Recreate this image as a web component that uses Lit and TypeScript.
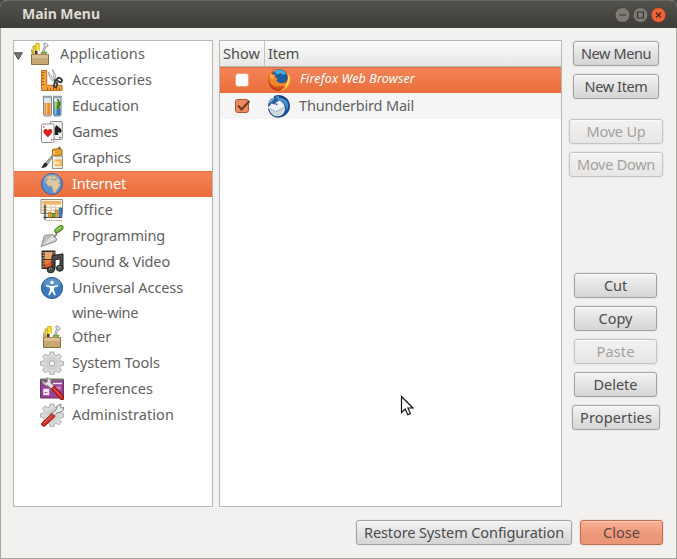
import { LitElement, html, svg, css, nothing } from "lit";
import { customElement, property } from "lit/decorators.js";
import { classMap } from "lit/directives/class-map.js";

const toolbox = svg`
  <path d="M5 13V4h3v9z" fill="#e9d76a" stroke="#a78d1c" stroke-width=".8"/>
  <path d="M7.600 9V1.500h3.600V9z" fill="#f7e32d" stroke="#c9a811" stroke-width=".8"/>
  <path d="M7 9h3v4H7z" fill="#49283f"/><path d="M9.500 8h1.600v5H9.500z" fill="#fff"/>
  <path d="M3.500 7.500l2 5.500H4z" fill="#ead14f" stroke="#9c7f16" stroke-width=".6"/>
  <path d="M13.500 12l3-8-.8-2.500 2-.7 1.300 1.400 1.200.8-.7 1.700-1.700.2-2.300 7.500z" fill="#e6e8e4" stroke="#83877f" stroke-width=".8"/>
  <path d="M12.500 13l1-3h5.500l-1 3z" fill="#88b84c" stroke="#5d8429" stroke-width=".6"/>
  <path d="M3.500 12.500h17v10h-17z" fill="#c7a874" stroke="#8d7040"/>
  <path d="M4 13h16v3H4z" fill="#d9c095"/><path d="M3.500 12.500h17" stroke="#a78855"/>`;

const gear = svg`
  <path d="M10.200 1h3.600l.6 3 1.800.8 2.700-1.800 2.500 2.500-1.800 2.700.8 1.800 3 .6v3.600l-3 .6-.8 1.800 1.800 2.700-2.500 2.500-2.700-1.800-1.800.8-.6 3h-3.600l-.6-3-1.800-.8-2.700 1.800-2.500-2.500 1.800-2.700-.8-1.800-3-.6v-3.600l3-.6.8-1.800-1.800-2.700 2.500-2.500 2.700 1.800 1.800-.8z"
    fill="#dcdcdb" stroke="#a3a4a2" stroke-width=".9"/>
  <circle cx="12" cy="12.400" r="6" fill="#d2d3d2" stroke="#c0c1bf" stroke-width=".7"/>
  <circle cx="12" cy="12.400" r="2.700" fill="#fff" stroke="#a3a4a2"/>`;

const icons: Record<string, unknown> = {
  toolbox,
  gear,
  accessories: svg`
    <path d="M1.500 2.500h5.200v14.800H22v5.200H1.500z" fill="#f2a13c" stroke="#c1701a"/>
    <path d="M2 4.500h2.500M2 7.500h2M2 10.500h2.500M2 13.500h2M2 16.500h2.500M7.500 22v-2.500M10.500 22v-2M13.500 22v-2.500M16.500 22v-2M19.500 22v-2.500" stroke="#94500d" stroke-width=".8"/>
    <path d="M15 13.500L8.500 4l.8 4.800 4.500 5.500zM14.300 12L12.500 1.500l3 5 .3 5.800z" fill="#e5e7e6" stroke="#969996" stroke-width=".8"/>
    <path d="M14 13l3.500-1.200" stroke="#3d3f3d" stroke-width="2.400"/>
    <ellipse cx="19.500" cy="12" rx="2.600" ry="1.900" transform="rotate(28 19.500 12)" fill="none" stroke="#3d3f3d" stroke-width="1.900"/>
    <ellipse cx="15.500" cy="17" rx="1.600" ry="2.400" transform="rotate(12 15.500 17)" fill="none" stroke="#3d3f3d" stroke-width="1.900"/>`,
  education: svg`
    <path d="M3.500 3h8v17.500q0 1.500-1.500 1.500H5q-1.500 0-1.500-1.500z" fill="#dfe6ea" stroke="#798991"/>
    <path d="M4.500 9h6v12h-6z" fill="#ef8f2c"/><path d="M6 9.500h1.300v11H6z" fill="#ffc98b"/>
    <path d="M13.500 3H21v17.500q0 1.500-1.500 1.500H15q-1.500 0-1.500-1.500z" fill="#d3e0e8" stroke="#687e8c"/>
    <path d="M14.300 7.500h6v7.500h-6z" fill="#659d35"/><path d="M14.300 15h6v6.200h-6z" fill="#3475b7"/>
    <path d="M15.200 5h1.300v15.500h-1.300z" fill="#ffffff99"/><path d="M17.500 5l2.500 5-3 4" stroke="#36641f" stroke-width="1.300" fill="none"/>
    <path d="M2.500 2.700H12M13 2.700h9" stroke="#93a1a8" stroke-width="1.700"/>`,
  games: svg`
    <rect x="10" y="1.500" width="12.300" height="18" rx="1.300" fill="#f0f0ef" stroke="#8d8f8c"/>
    <path d="M16.500 5c1.400 2 5 3.200 5 5.900 0 2-2.500 2.400-3.700 1.200l.8 3h-4v-6c0-1.600 1.200-2.700 1.900-4.100z" fill="#1c1d1c"/>
    <rect x="1.500" y="4" width="12.500" height="18.500" rx="1.300" fill="#fff" stroke="#8d8f8c"/>
    <path d="M7.900 17.500c-1.400-2-4.500-3.700-4.500-6.400 0-2.500 3.200-3 4.500-.7 1.300-2.300 4.400-1.800 4.400.7 0 2.700-3 4.400-4.400 6.400z" fill="#d92020"/>
    <path d="M3.200 6h1.500v1.700H3.200zM10.900 19h1.500v1.700h-1.500z" fill="#e36161"/><path d="M19.500 17h1.200v1.200h-1.200z" fill="#333"/>`,
  graphics: svg`
    <path d="M12.500 10h10v12.500h-10z" fill="#e9e9df" stroke="#92918a"/>
    <path d="M12.500 3.500Q17.500 1.800 22 3.500V9q-5 1.500-9.500 0z" fill="#e5a02d" stroke="#a66d14"/>
    <path d="M18.500.8l1.700-.3.500 2.500h-2.500z" fill="#7b5a2b"/><path d="M14 5v3.500" stroke="#ffdd8e" stroke-width="1.500"/>
    <path d="M13 13.500h9V20h-9z" fill="#f3b24b"/><path d="M15 15.500h5v3h-5z" fill="#fae1b5"/><path d="M14 11v10.500" stroke="#fff" stroke-width="1.300"/>
    <path d="M12 9.500L5.500 17l2 1.500 5-7z" fill="#a6a8a3" stroke="#71736f" stroke-width=".7"/>
    <path d="M5.300 16.500l2.500 2c-1 2.600-3.800 3.500-6.800 3.500 1.800-1.200 2.200-4.800 4.300-5.500z" fill="#272827"/>`,
  globe: svg`
    <circle cx="12" cy="12" r="10.500" fill="#5b91cf" stroke="#355e98"/>
    <ellipse cx="12" cy="8" rx="8.500" ry="6" fill="#8db5e3" opacity=".65"/>
    <path d="M4.500 7.500Q7 4 10 3.500l2 1 2.500-1 2 1.500-1 1 3 1 1.500 3-1.500 1.500 2 1-2.500 4-2.500 4-2 .5-1-4.500-1-2.500-3 .2L6 10.500l1-2.500 2-1.500-2 .2z" fill="#e0c79d" stroke="#b99d6a" stroke-width=".5"/>
    <path d="M11 7l2.500.5 3 .2" stroke="#6d9bd0" stroke-width="1.200" fill="none"/>`,
  office: svg`
    <path d="M1 1.500h21.500v14H1z" fill="#f9f5e7" stroke="#918f82"/>
    <path d="M2.500 3h18.500v3.500H2.500z" fill="#f4b35e"/><path d="M2.500 6.500h4v8h-4z" fill="#f8d395"/>
    <path d="M2.500 9.500H21M2.500 12.500H21M11 3v12M15.500 3v12" stroke="#cfc4a7" stroke-width=".7"/>
    <path d="M5 6.500v15.500M3.500 19.500H22" stroke="#3c3b37" stroke-width="1.200"/><path d="M3.500 9h3M3.500 12h3M3.500 15h3M3.500 18h3" stroke="#444" stroke-width=".7"/>
    <path d="M8.200 14.500h2.600v5H8.200z" fill="#f4a02b" stroke="#9e6113" stroke-width=".7"/><path d="M12 15.500h2.400v4H12z" fill="#67a736" stroke="#3f6c1e" stroke-width=".7"/>
    <path d="M15.200 12h2.700v7.500h-2.700z" fill="#f0a92f" stroke="#96651b" stroke-width=".7"/><path d="M19.200 10h2.700v9.500h-2.700z" fill="#467fc3" stroke="#264e84" stroke-width=".7"/>
    <path d="M6 22.500h16" stroke="#c18a51" stroke-dasharray="1.500 1"/>`,
  trowel: svg`
    <path d="M1.300 22.500L4 12.500q.5-1.200 2-1.300L13 10.500l4 5q-.6 1.500-2 2.200z" fill="#bdc0be" stroke="#858884" stroke-width=".9"/>
    <path d="M2.500 21.200L12.500 11.500l3.300 4.200z" fill="#e0e2e1"/><path d="M13.500 13l3-2.300-.5-2.700" fill="none" stroke="#777" stroke-width="1.500"/>
    <path d="M14.500 7.500q0-2 2.500-4l3.500-2q2-.5 2.500 1t-1 3.500L18 8.500q-2.200 1.200-3.500-1z" fill="#78b33d" stroke="#477623"/>
    <path d="M16.300 6.500q1.500-2 4.700-3.500" stroke="#bce28d" fill="none"/>`,
  media: svg`
    <path d="M2 1h13v17.500H2z" fill="#3f332b" stroke="#2f2926"/>
    <path d="M4.500 2h8v7h-8z" fill="#e9a768"/><path d="M4.500 10h8v7.500h-8z" fill="#dd592c"/><path d="M4.500 10h8L8 13.500l-3.500 1z" fill="#f2793d"/>
    <path d="M3.200 2v16M14 2v16" stroke="#eee0ca" stroke-dasharray="1.300 1.500" stroke-width="1"/>
    <path d="M12 5.800l11-2v14.400h-3V8.800l-5.300 1V20H12z" fill="#4b4d4b" stroke="#222"/>
    <ellipse cx="10.700" cy="19.800" rx="3.600" ry="3" fill="#4b4d4b" stroke="#222"/><ellipse cx="19.800" cy="18.200" rx="3.400" ry="3" fill="#4b4d4b" stroke="#222"/>
    <path d="M9 19q1.500-1.500 3 0M18.200 17.500q1.500-1.500 3 0" fill="none" stroke="#999"/>`,
  access: svg`
    <circle cx="12" cy="12" r="10.600" fill="#3c7ab9" stroke="#285b91"/><ellipse cx="12" cy="7.500" rx="8.500" ry="5.500" fill="#77a7d5" opacity=".5"/>
    <circle cx="12" cy="6.500" r="1.700" fill="#fff"/>
    <path d="M6.300 9l4.200 1h3l4.200-1 .3 1.200-4 1.400v2.600l1.800 4.700-1.300.5L12 15.200l-2.500 4.200-1.300-.5 1.800-4.700v-2.600l-4-1.400z" fill="#fff"/>`,
  preferences: svg`
    <path d="M.5 2.500h23V21H.5z" fill="#974394" stroke="#6a3269"/><path d="M.5 1.500h23v2.300H.5z" fill="#6e6d69"/>
    <path d="M13 6.500h9M4 12.500h4.500v5H4z" fill="#f5e8f4" stroke="#f5e8f4" stroke-width="1.500"/><path d="M15 9.500h6v3h-6z" fill="#c68cc4"/><path d="M4.500 15.500h3" stroke="#a66ba2"/>
    <path d="M2 3.500L5.500 6 8 4 6.500.8q3.500 0 4.500 3l-.3 2.200 4 4-2.500 2.500-4.500-4q-4 .5-5.700-5z" fill="#e4e5e2" stroke="#8f918c"/>
    <path d="M11.500 11.500l3-2.500 8.500 9.500.5 4h-3z" fill="#cb2927" stroke="#921816"/><path d="M13.500 11.500l7.500 8" stroke="#f07167"/>`,
  admin: svg`${gear}
    <path d="M11 11.500l5-4.700L17 3l4-2-.5 3 1.500 1 2-.8q-.2 4-4 5.300h-2.500L13 14z" fill="#e6e8e4" stroke="#7f837c"/>
    <path d="M1.500 20.500L12 10.500l3 3-10.500 9.800q-3 .2-3-2.800z" fill="#cf302b" stroke="#941c18"/><path d="M4 20l8.500-8" stroke="#ef756b"/>`,
  firefox: svg`
    <circle cx="12" cy="12" r="10.800" fill="#d9531e"/>
    <path d="M22 6.500q2.500 6-.5 11-3.500 5.300-9.500 5.300 7-2.500 8-8z" fill="#f6c22f"/>
    <circle cx="12.500" cy="9.300" r="8" fill="#1e5f9f"/>
    <path d="M7 3.300Q12 .5 17 3l2.500 3-4 .5-2-1.500-3 1.500z" fill="#48b1dd"/>
    <path d="M18.500 3.500q3 3 2.600 7.500-.6 5-5.600 7 5.500.5 7-5.500.8-5.500-4-9z" fill="#fbe05a"/>
    <path d="M3.500 4.500L5.300 6.500l3.500.2L7.800 9l3 1.200-1.500 2.300 2.200 2q3 1.800 7-.8-1.500 4.800-6.500 4.800-6 .5-9-4.500-1.500-5 .5-9.500z" fill="#f0852a"/>
    <path d="M2.500 9.500q.5-3 1.500-4.500l1.300 2 2.500.3-1.500 2 .5 2.700z" fill="#f9ae3f"/>
    <path d="M1.200 13.500q3 6.500 9.800 7.500 3 .2 5-.8-2 2.500-5 2.500-8-.5-9.800-9.200z" fill="#bb3a18"/>`,
  thunderbird: svg`
    <path d="M7 2Q14-.5 19.500 4q4.800 5 3 11.500Q20.500 21.500 14 23.300q-5.500.6-9.500-2.800z" fill="#1f4f93"/>
    <path d="M8.500 2.500Q16 1.500 20 7.500q2 5-.5 9.500 0-6-4-8.500-4-2-8-1.500z" fill="#4394cf"/>
    <path d="M12 1.500q6 .5 9 6.500-4.500-4.500-9-4.500zM15 7.500q3.800 3 3.500 7.500-1.500-4-5-6z" fill="#143874"/>
    <circle cx="10" cy="14.500" r="8" fill="#eef1f4"/>
    <path d="M3 15.500l5.500 3 8.500-5q-.5 6.500-5.500 8.500Q4.500 22 3 15.500z" fill="#cdd7e2"/>
    <path d="M3 14.500l5.500 3.500 8.500-4.500" stroke="#9caec1" fill="none"/>
    <path d="M1 13Q.7 7 4.500 4.500L9 3l3 4-2.500 1-2 2.500-3-1L2.500 12z" fill="#2b5f9f"/>
    <path d="M1.700 10Q2 6 5.500 4.500L8 4 4.500 7.500z" fill="#8eb4d8"/>
    <path d="M8 9.500l3 .2-1.600 1.500z" fill="#23436b"/>
    <path d="M1.500 14.500q1 6 7 8.300 3.500.6 6-.5" stroke="#1c4685" stroke-width="1.200" fill="none"/>`,
};

/** A text run whose tracking is set so that it occupies a given width. */
@customElement("fit-label")
class FitLabel extends LitElement {
  @property() text = "";
  @property({ type: Number }) w = 0;
  static styles = css`
    :host { display: inline-block; white-space: pre; padding-bottom: 2px; }
    .run { display: inline-block; }
  `;
  render() {
    return html`<span class="run">${this.text}</span>`;
  }
  firstUpdated() {
    const run = this.renderRoot.querySelector(".run") as HTMLElement;
    const natural = run.getBoundingClientRect().width;
    const gap = (this.w - natural) / this.text.length;
    run.style.letterSpacing = `${gap.toFixed(3)}px`;
  }
}

const icon = (name: string) =>
  html`<svg class="icon" viewBox="0 0 24 24" width="24" height="24">${icons[name]}</svg>`;

const tree: [string, string, number][] = [
  ["Accessories", "accessories", 80],
  ["Education", "education", 67],
  ["Games", "games", 46],
  ["Graphics", "graphics", 59],
  ["Internet", "globe", 54],
  ["Office", "office", 41],
  ["Programming", "trowel", 93],
  ["Sound & Video", "media", 98],
  ["Universal Access", "access", 111],
  ["wine-wine", "", 66],
  ["Other", "toolbox", 39],
  ["System Tools", "gear", 88],
  ["Preferences", "preferences", 81],
  ["Administration", "admin", 102],
];

@customElement("app-root")
class AppRoot extends LitElement {
  static styles = css`
    * { box-sizing: border-box; }
    :host {
      display: block; position: relative; width: 677px; height: 559px; overflow: hidden;
      background: #4a4944; color: #626260;
      font: 14.500px/20px "Noto Sans", "Open Sans", sans-serif;
    }
    .window { height: 559px; display: flex; flex-direction: column; border-radius: 7px 7px 0 0; overflow: hidden; background: #f2f1f0; }
    .title { height: 28px; flex: none; display: flex; align-items: center; padding: 0 11px 0 22px; background: linear-gradient(#53524c, #3d3c38); border-top: 1px solid #66655f; color: #dfdbd2; font-weight: 700; font-size: 14px; }
    .controls { display: flex; gap: 3px; margin-left: auto; }
    .ctl { display: block; }
    .body { flex: 1; display: flex; flex-direction: column; padding: 12px 12px 0; border: 1px solid #a7a5a2; border-width: 0 1px 1px; }
    .main { display: flex; height: 467px; }
    .pane { background: #fff; border: 1px solid #b9b7b4; }
    .tree { width: 200px; margin-right: 6px; }
    .list { width: 343px; margin-right: 7px; }
    .row { display: flex; align-items: center; height: 26px; padding-left: 26px; }
    .row fit-label { margin-left: 8px; }
    .root { padding-left: 0; }
    .root .icon { margin-left: 5px; }
    .expander { margin-top: 3px; }
    .plain { height: 23px; padding-left: 50px; }
    .selected { background: linear-gradient(#f58458, #ea6d3b); box-shadow: inset 0 1px #e06c3f; color: #fff; }
    .icon { display: block; flex: none; }
    .head { display: flex; height: 26px; background: linear-gradient(#fcfcfc, #e7e6e5); border-bottom: 1px solid #bcb9b6; color: #4c4c4a; line-height: 25px; }
    .h1 { width: 45px; padding-left: 3px; border-right: 1px solid #c5c3c0; }
    .h2 { padding-left: 3px; }
    .item { padding-left: 15px; }
    .item .icon { margin-left: 17px; }
    .alt { background: #f5f5f5; }
    .item.selected fit-label { font-style: italic; font-size: 12.500px; margin-left: 9px; }
    .side { width: 94px; display: flex; flex-direction: column; align-items: center; gap: 8px; padding-top: 1px; }
    .btn { width: 86px; height: 25px; flex: none; padding: 0; display: flex; align-items: center; justify-content: center; font: inherit; color: #4c4c4c; border: 1px solid #a3a2a1; border-radius: 3px; background: linear-gradient(#f4f4f4, #e3e3e3 50%, #d5d5d6); box-shadow: inset 0 1px #fff9, 0 0 0 1px #e9e8e6; }
    .wide { width: 94px; } .mid { width: 83px; margin-right: 1px; } .props { width: 88px; }
    .off { color: #a3a19f; border-color: #c6c4c2; background: linear-gradient(#f3f2f1, #e7e6e5); }
    .gap1 { margin-top: 12px; } .gap2 { margin-top: 88px; }
    .foot { display: flex; justify-content: flex-end; gap: 8px; padding: 13px 1px 0 0; }
    .restore { width: 216px; }
    .close { width: 83px; border-color: #bd6d50; background: linear-gradient(#f8b196, #ed977a 60%, #ec9678); box-shadow: inset 0 1px #fbcdb8, 0 0 0 1px #ebe3de; color: #5a4741; }
    .cursor { position: absolute; left: 400px; top: 395px; }
  `;

  button(label: string, w: number, cls = "") {
    return html`<button class="btn ${cls}"><fit-label text=${label} w=${w}></fit-label></button>`;
  }

  treeRow([label, name, w]: [string, string, number]) {
    return html`<div class=${classMap({ row: true, plain: !name, selected: label === "Internet" })}>
      ${name ? icon(name) : nothing}<fit-label text=${label} w=${w}></fit-label>
    </div>`;
  }

  render() {
    return html`
      <div class="window">
        <div class="title">
          <fit-label text="Main Menu" w="78"></fit-label>
          <div class="controls">
            <svg class="ctl" width="15" height="16" viewBox="0 0 15 16"><circle cx="7.500" cy="8" r="7.400" fill="#7e7c75" stroke="#35342f" stroke-width=".6"/><path d="M4 8h7" stroke="#35342f" stroke-width="1.200"/></svg>
            <svg class="ctl" width="15" height="16" viewBox="0 0 15 16"><circle cx="7.500" cy="8" r="7.400" fill="#7e7c75" stroke="#35342f" stroke-width=".6"/><path d="M4.500 5h6v6h-6z" fill="none" stroke="#35342f" stroke-width="1.200"/></svg>
            <svg class="ctl" width="15" height="16" viewBox="0 0 15 16"><circle cx="7.500" cy="8" r="7.400" fill="#ee6439" stroke="#54291c" stroke-width=".6"/><path d="M5 5.500l5 5m0-5l-5 5" stroke="#54271b" stroke-width="1.300"/></svg>
          </div>
        </div>
        <div class="body">
          <div class="main">
            <div class="pane tree">
              <div class="row root">
                <svg class="expander" width="9" height="8" viewBox="0 0 9 8"><path d="M.3.8h8L4.300 7.500z" fill="#777" stroke="#3f3f3d" stroke-width=".9"/></svg>
                ${icon("toolbox")}<fit-label text="Applications" w="85"></fit-label>
              </div>
              ${tree.map((r) => this.treeRow(r))}
            </div>
            <div class="pane list">
              <div class="head">
                <div class="h1"><fit-label text="Show" w="37"></fit-label></div>
                <div class="h2"><fit-label text="Item" w="31"></fit-label></div>
              </div>
              <div class="row item selected">
                <svg width="15" height="14" viewBox="0 0 15 14"><rect x=".5" y=".5" width="13" height="13" rx="2.500" fill="#fff" stroke="#f3a080"/></svg>
                ${icon("firefox")}<fit-label text="Firefox Web Browser" w="115"></fit-label>
              </div>
              <div class="row item alt">
                <svg width="15" height="14" viewBox="0 0 15 14"><rect x=".5" y=".5" width="13" height="13" rx="2.500" fill="#f08a61" stroke="#b4532f"/><path d="M3 6.500l3.500 4L14.500 2" fill="none" stroke="#6b3a28" stroke-width="2"/></svg>
                ${icon("thunderbird")}<fit-label text="Thunderbird Mail" w="115"></fit-label>
              </div>
            </div>
            <div class="side">
              ${this.button("New Menu", 70)}
              ${this.button("New Item", 63)}
              ${this.button("Move Up", 59, "wide off gap1")}
              ${this.button("Move Down", 78, "wide off")}
              ${this.button("Cut", 23, "mid gap2")}
              ${this.button("Copy", 34, "mid")}
              ${this.button("Paste", 38, "mid off")}
              ${this.button("Delete", 44, "mid")}
              ${this.button("Properties", 72, "props")}
            </div>
          </div>
          <div class="foot">
            ${this.button("Restore System Configuration", 200, "restore")}
            ${this.button("Close", 37, "close")}
          </div>
        </div>
      </div>
      <svg class="cursor" width="15" height="22" viewBox="0 0 15 22"><path d="M1.500 1.500v16l3.700-3.500 2.600 5.800 2.600-1.200-2.500-5.600h5z" fill="#fff" stroke="#111" stroke-width="1.200"/></svg>
    `;
  }
}
